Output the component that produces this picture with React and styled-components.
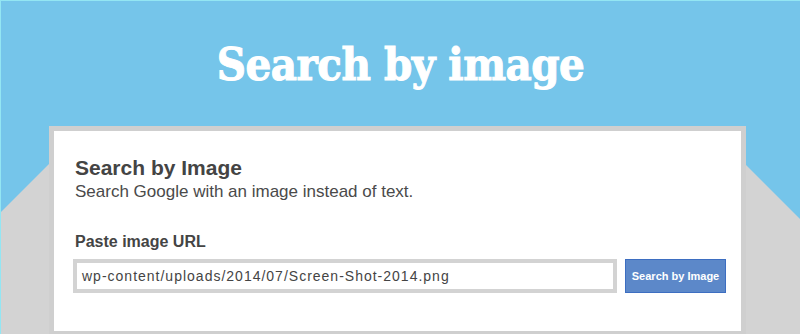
import styled, { createGlobalStyle } from 'styled-components';

const Global = createGlobalStyle`
    html, body {
        margin: 0;
        padding: 0;
    }
    body {
        font-family: 'Liberation Sans', Arial, sans-serif;
    }
`;

const Stage = styled.div`
    position: relative;
    width: 800px;
    height: 334px;
    overflow: hidden;
    box-sizing: border-box;
    background: #75c5ea;
    border-top: 1px solid #93e6f3;
    border-left: 1px solid #93e6f3;
`;

// grey desk surface drawn behind the card
const Backdrop = styled.div`
    position: absolute;
    inset: 0;
    background: #d3d3d3;
    clip-path: polygon(0 211px, 49px 162px, 743px 162px, 800px 219px, 800px 334px, 0 334px);
`;

const Hero = styled.header`
    position: relative;
    height: 125px;
    display: flex;
    justify-content: center;
    align-items: flex-start;
`;

const HeroTitle = styled.h1`
    margin: 36px 0 0;
    font-family: 'DejaVu Serif', serif;
    font-stretch: condensed;
    font-weight: 700;
    font-size: 45px;
    line-height: 56px;
    color: #fff;
    letter-spacing: -0.5px;
    -webkit-text-stroke: 1px #fff;
`;

const Card = styled.section`
    position: relative;
    margin-left: 48px;
    width: 697px;
    height: 209px;
    box-sizing: border-box;
    background: #fff;
    border: 5px solid #cfcfcf;
    border-bottom-width: 4px;
    padding: 25px 21px 0;
    color: #444;
`;

const Heading = styled.h2`
    margin: 0;
    font-size: 21px;
    line-height: 24px;
    font-weight: 700;
    color: #444;
`;

const Lead = styled.p`
    margin: 2px 0 0;
    font-size: 17px;
    line-height: 20px;
    color: #4a4a4a;
`;

const Label = styled.label`
    display: block;
    margin-top: 31px;
    font-size: 16px;
    line-height: 18px;
    font-weight: 700;
    color: #444;
`;

const Row = styled.div`
    display: flex;
    gap: 8px;
    margin: 8px 0 0 -2px;
`;

const UrlInput = styled.div`
    flex: none;
    width: 544px;
    height: 34px;
    box-sizing: border-box;
    border: 4px solid #d3d3d3;
    background: #fff;
    padding: 0 5px;
    font-size: 14px;
    line-height: 26px;
    letter-spacing: 1px;
    color: #444;
    white-space: nowrap;
    overflow: hidden;
`;

const Button = styled.button`
    flex: none;
    width: 101px;
    height: 34px;
    box-sizing: border-box;
    border: 1px solid #3d6ec1;
    background: #5c88c9;
    color: #fff;
    font-family: 'Liberation Sans', Arial, sans-serif;
    font-weight: 700;
    font-size: 11px;
    padding: 0;
    cursor: pointer;
`;

export default function App() {
    return (
        <>
            <Global />
            <Stage>
                <Backdrop />
                <Hero>
                    <HeroTitle>Search by image</HeroTitle>
                </Hero>
                <Card>
                    <Heading>Search by Image</Heading>
                    <Lead>Search Google with an image instead of text.</Lead>
                    <Label>Paste image URL</Label>
                    <Row>
                        <UrlInput>wp-content/uploads/2014/07/Screen-Shot-2014.png</UrlInput>
                        <Button>Search by Image</Button>
                    </Row>
                </Card>
            </Stage>
        </>
    );
}
